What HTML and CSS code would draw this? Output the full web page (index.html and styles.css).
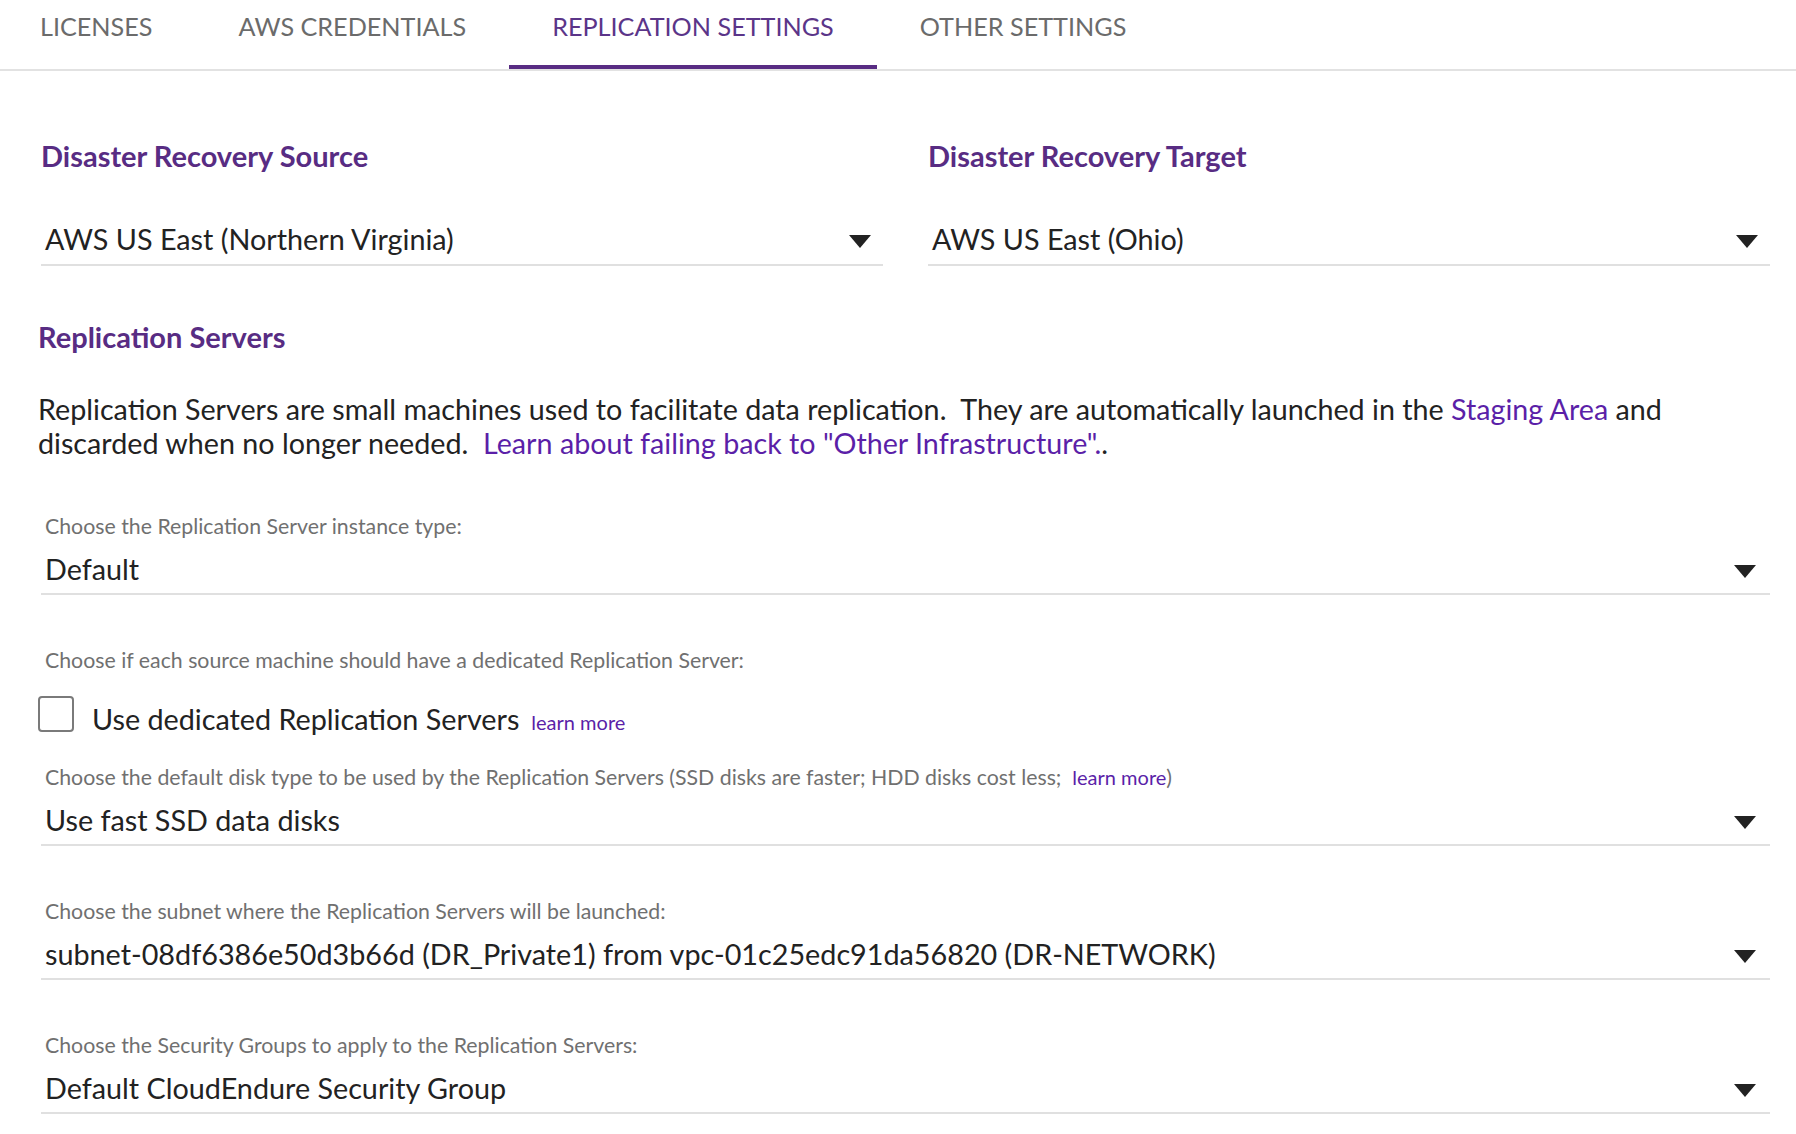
FILE: index.html
```html
<!DOCTYPE html>
<html lang="en">
<head>
<meta charset="utf-8">
<title>Replication Settings</title>
<link rel="stylesheet" href="styles.css">
</head>
<body>
<nav class="tabs">
  <div class="tab">LICENSES</div>
  <div class="tab">AWS CREDENTIALS</div>
  <div class="tab active">REPLICATION SETTINGS</div>
  <div class="tab">OTHER SETTINGS</div>
</nav>
<main class="content">
  <section class="regions">
    <div class="region">
      <h2 class="heading">Disaster Recovery Source</h2>
      <div class="select"><span class="value">AWS US East (Northern Virginia)</span><span class="arrow"></span></div>
    </div>
    <div class="region">
      <h2 class="heading">Disaster Recovery Target</h2>
      <div class="select"><span class="value">AWS US East (Ohio)</span><span class="arrow"></span></div>
    </div>
  </section>

  <h2 class="heading servers-heading">Replication Servers</h2>
  <p class="intro">Replication Servers are small machines used to facilitate data replication.&nbsp; They are automatically launched in the <a class="link" href="#">Staging Area</a> and discarded when no longer needed.&nbsp; <a class="link" href="#">Learn about failing back to "Other Infrastructure".</a>.</p>

  <div class="field first">
    <div class="label">Choose the Replication Server instance type:</div>
    <div class="select"><span class="value">Default</span><span class="arrow"></span></div>
  </div>

  <div class="field">
    <div class="label">Choose if each source machine should have a dedicated Replication Server:</div>
    <div class="check-row">
      <span class="checkbox"></span>
      <span class="check-text">Use dedicated Replication Servers</span>
      <a class="small-link" href="#">learn more</a>
    </div>
  </div>

  <div class="field after-check">
    <div class="label">Choose the default disk type to be used by the Replication Servers (SSD disks are faster; HDD disks cost less;&nbsp; <a class="label-link" href="#">learn more</a>)</div>
    <div class="select"><span class="value">Use fast SSD data disks</span><span class="arrow"></span></div>
  </div>

  <div class="field">
    <div class="label">Choose the subnet where the Replication Servers will be launched:</div>
    <div class="select"><span class="value">subnet-08df6386e50d3b66d (DR_Private1) from vpc-01c25edc91da56820 (DR-NETWORK)</span><span class="arrow"></span></div>
  </div>

  <div class="field">
    <div class="label">Choose the Security Groups to apply to the Replication Servers:</div>
    <div class="select"><span class="value">Default CloudEndure Security Group</span><span class="arrow"></span></div>
  </div>
</main>
</body>
</html>
```

FILE: styles.css
```css
* { box-sizing: border-box; }

html, body {
  margin: 0;
  padding: 0;
  background: #ffffff;
  font-family: Lato, "Open Sans", "Liberation Sans", sans-serif;
  color: #222222;
}

.tabs {
  display: flex;
  height: 71px;
  border-bottom: 2px solid #e2e2e2;
}

.tabs .tab:first-child {
  margin-left: -3px;
}

.tab {
  padding: 12px 43px 0 43px;
  font-size: 25.2px;
  line-height: 28px;
  color: #6b6b6b;
  height: 69px;
  white-space: nowrap;
}

.tab.active {
  color: #5b3589;
  border-bottom: 4px solid #582c83;
}

.content {
  padding: 0 26px 0 38px;
}

.regions {
  display: grid;
  grid-template-columns: 1fr 1fr;
  column-gap: 45px;
  padding-left: 3px;
  margin-top: 69px;
}

.heading {
  margin: 0;
  font-size: 29px;
  line-height: 32px;
  font-weight: 700;
  color: #582c83;
}

.select {
  display: flex;
  align-items: center;
  justify-content: space-between;
  border-bottom: 2px solid #e0e0e0;
  padding: 0 14px 6px 4px;
}

.regions .select {
  margin-top: 49px;
  padding-bottom: 7px;
  padding-right: 12px;
}

.value {
  font-size: 28.75px;
  line-height: 36px;
  color: #222222;
}

.arrow {
  width: 0;
  height: 0;
  border-left: 11px solid transparent;
  border-right: 11px solid transparent;
  border-top: 13px solid #222222;
  margin-top: 4px;
}

.servers-heading {
  margin-top: 55px;
}

.intro {
  margin: 39px 0 0 0;
  font-size: 28.7px;
  line-height: 34px;
  color: #222222;
}

.link {
  color: #5b1fa8;
  text-decoration: none;
}

.field {
  padding-left: 3px;
  margin-top: 53px;
}

.field.first {
  margin-top: 54px;
}

.label {
  font-size: 21.3px;
  line-height: 24px;
  color: #707070;
  margin-bottom: 13px;
  padding-left: 4px;
}

.label-link {
  font-size: 20px;
  color: #5b1fa8;
  text-decoration: none;
}

.check-row {
  display: flex;
  align-items: center;
  margin-left: -3px;
  margin-top: 29px;
}

.checkbox {
  width: 36px;
  height: 36px;
  border: 2px solid #7a7a7a;
  border-radius: 4px;
  margin-top: -10px;
}

.check-text {
  font-size: 28.75px;
  line-height: 36px;
  margin-left: 18px;
}

.small-link {
  font-size: 20px;
  color: #5b1fa8;
  text-decoration: none;
  margin-left: 12px;
  margin-top: 6px;
}

.field.after-check {
  margin-top: 28px;
}
```
